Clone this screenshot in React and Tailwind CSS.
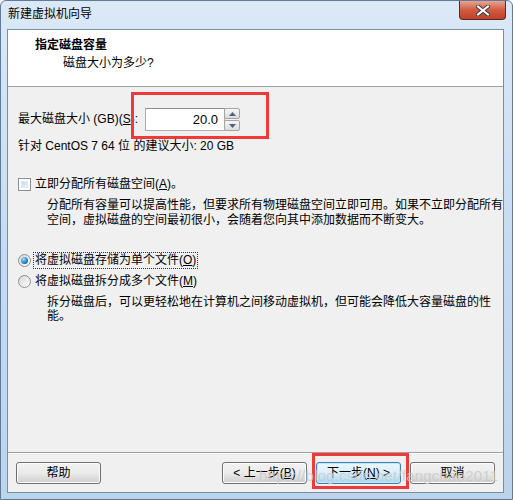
import React from "react";

const font = "font-['Liberation_Sans','Noto_Sans_CJK_SC',sans-serif]";

function Btn({ children, focus }) {
  return (
    <div
      className={
        "w-[85px] h-[22px] rounded-[3px] border flex items-center justify-center text-[12px] text-black " +
        (focus
          ? "border-[#3c7fb1] bg-gradient-to-b from-[#eaf6fd] via-[#d9f0fc] to-[#a7d9f5] shadow-[inset_0_0_0_1px_#c4e5f6]"
          : "border-[#707070] bg-gradient-to-b from-[#f2f2f2] via-[#ebebeb] to-[#cfcfcf] shadow-[inset_0_0_0_1px_#fcfcfc]")
      }
    >
      {children}
    </div>
  );
}

function Radio({ checked }) {
  return (
    <div className="w-[13px] h-[13px] rounded-full border border-[#8e8f8f] bg-gradient-to-br from-[#d8d8d8] to-[#fbfbfb] flex items-center justify-center">
      {checked && (
        <div className="w-[7px] h-[7px] rounded-full bg-[radial-gradient(circle_at_35%_30%,#9fe0ff,#2a86c6_55%,#0d4f86)]" />
      )}
    </div>
  );
}

export default function App() {
  return (
    <div className={"relative w-[513px] h-[500px] bg-gradient-to-b from-[#dbe9f7] via-[#c6dbf1] to-[#bcd3ec] border border-[#5f7b98] rounded-t-[6px] flex flex-col " + font}>
      {/* title bar */}
      <div className="h-[28px] flex items-start justify-between">
        <div className="pl-[7px] pt-[6px] text-[12px] leading-[15px] text-black">新建虚拟机向导</div>
        <div className="mr-[6px] w-[47px] h-[19px] rounded-b-[4px] border border-t-0 border-[#5a2a25] bg-gradient-to-b from-[#e8a393] via-[#cf5b43] to-[#c23f24] flex items-center justify-center">
          <svg width="14" height="11" viewBox="0 0 14 11">
            <path d="M2 1.5 L12 9.5 M12 1.5 L2 9.5" stroke="#3a3a3a" strokeWidth="4" strokeLinecap="square" />
            <path d="M2 1.5 L12 9.5 M12 1.5 L2 9.5" stroke="#ffffff" strokeWidth="2" strokeLinecap="square" />
          </svg>
        </div>
      </div>

      {/* client area */}
      <div className="mx-[6px] mr-[8px] h-[464px] border border-[#7a8ea3] bg-[#f0f0f0] flex flex-col text-[12px] text-black">
        {/* header */}
        <div className="h-[57px] bg-white border-b border-[#a0a0a0] pt-[8px] pl-[27px]">
          <div className="font-bold leading-[15px]">指定磁盘容量</div>
          <div className="mt-[3px] pl-[28px] leading-[15px]">磁盘大小为多少?</div>
        </div>

        {/* body */}
        <div className="flex-1 pl-[10px]">
          <div className="mt-[21px] flex items-center">
            <div className="w-[127px] leading-[15px]">
              最大磁盘大小 (GB)(<span className="underline">S</span>):
            </div>
            <div className="flex items-center h-[23px]">
              <div className="w-[80px] h-[23px] bg-white border border-[#abadb3] border-t-[#8b8e96] flex items-center justify-end pr-[6px] text-[13px]">
                20.0
              </div>
              <div className="flex flex-col gap-[1px] -ml-[1px]">
                <div className="w-[16px] h-[11px] border border-[#a5a5a5] rounded-[2px] bg-gradient-to-b from-[#f6f6f6] to-[#dcdcdc] flex items-center justify-center">
                  <svg width="7" height="4" viewBox="0 0 7 4"><path d="M0 4 L3.5 0 L7 4 Z" fill="#4d6185" /></svg>
                </div>
                <div className="w-[16px] h-[11px] border border-[#a5a5a5] rounded-[2px] bg-gradient-to-b from-[#f6f6f6] to-[#dcdcdc] flex items-center justify-center">
                  <svg width="7" height="4" viewBox="0 0 7 4"><path d="M0 0 L3.5 4 L7 0 Z" fill="#4d6185" /></svg>
                </div>
              </div>
            </div>
          </div>

          <div className="mt-[8px] leading-[15px]">针对 CentOS 7 64 位 的建议大小: 20 GB</div>

          <div className="mt-[23px] flex items-center h-[15px]">
            <div className="w-[13px] h-[13px] border border-[#8e8f8f] bg-white p-[2px]">
              <div className="w-full h-full bg-gradient-to-br from-[#b9d9f2] to-[#eaf5fd] border border-[#d8ebf8]" />
            </div>
            <span className="ml-[4px] leading-[15px]">
              立即分配所有磁盘空间(<span className="underline">A</span>)。
            </span>
          </div>

          <div className="mt-[6px] pl-[29px] leading-[15px]">
            分配所有容量可以提高性能，但要求所有物理磁盘空间立即可用。如果不立即分配所有
            <br />
            空间，虚拟磁盘的空间最初很小，会随着您向其中添加数据而不断变大。
          </div>

          <div className="mt-[25px] flex items-center h-[15px]">
            <Radio checked />
            <span className="ml-[3px] px-[1px] leading-[15px] outline outline-1 outline-dotted outline-[#333]">
              将虚拟磁盘存储为单个文件(<span className="underline">O</span>)
            </span>
          </div>

          <div className="mt-[6px] flex items-center h-[15px]">
            <Radio />
            <span className="ml-[4px] leading-[15px]">
              将虚拟磁盘拆分成多个文件(<span className="underline">M</span>)
            </span>
          </div>

          <div className="mt-[6px] pl-[29px] leading-[14px]">
            拆分磁盘后，可以更轻松地在计算机之间移动虚拟机，但可能会降低大容量磁盘的性
            <br />
            能。
          </div>
        </div>

        {/* footer */}
        <div className="h-[40px] border-t border-[#a0a0a0] shadow-[inset_0_1px_0_#ffffff] pt-[9px] px-[8px] flex items-start">
          <Btn>帮助</Btn>
          <div className="ml-auto flex gap-[9px]">
            <div className="flex gap-[9px]">
              <Btn>&lt; 上一步(<span className="underline">B</span>)</Btn>
              <Btn focus>下一步(<span className="underline">N</span>) &gt;</Btn>
            </div>
            <Btn>取消</Btn>
          </div>
        </div>
      </div>

      {/* annotations */}
      <div className="absolute left-[130px] top-[91px] w-[138px] h-[47px] border-[3px] border-[#ef3a3a] pointer-events-none" />
      <div className="absolute left-[311px] top-[452px] w-[97px] h-[36px] border-[3px] border-[#ef3a3a] pointer-events-none" />
      <div className="absolute left-[258px] top-[465px] text-[15px] leading-[20px] text-[#c9c9c9] opacity-80 tracking-[0.2px] pointer-events-none font-['Liberation_Sans',sans-serif]">
        https://blog.csdn.net/fangchao2011
      </div>
    </div>
  );
}
